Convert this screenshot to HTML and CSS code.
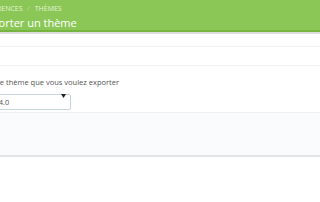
FILE: index.html
```html
<!DOCTYPE html>
<html lang="fr">
<head>
  <meta charset="UTF-8" />
  <title>Exporter un thème</title>
  <link rel="stylesheet" href="styles.css">
</head>
<body>
  <div class="toolbar">
    <div class="toolbar-inner">
      <div class="breadcrumb">Préférences <span class="sep">/</span> Thèmes</div>
      <h2 class="page-title">Exporter un thème</h2>
    </div>
  </div>

  <div class="panel">
    <div class="panel-heading"></div>
    <div class="panel-body">
      <label class="form-label" for="theme">Sélectionnez le thème que vous voulez exporter</label>
      <div class="select-wrap">
        <select id="theme" class="form-select">
          <option>default-bootstrap 1.4.0</option>
        </select>
        <svg class="caret" width="5" height="4" viewBox="0 0 5 4"><path d="M0 0h5L2.5 4z" fill="#222"/></svg>
      </div>
    </div>
    <div class="panel-footer"></div>
  </div>
</body>
</html>
```

FILE: styles.css
```css
body {
  margin: 0;
  padding: 0;
  font-family: "Open Sans", Arial, sans-serif;
  background: #fff;
  color: #555;
  overflow: hidden;
}

.toolbar {
  background-color: #8bc756;
  border-bottom: 2px solid #76b440;
  box-shadow: 0 2px 0 #dcdcdc;
  height: 30px;
}

.toolbar-inner {
  margin-left: -20px;
  padding-top: 4px;
}

.breadcrumb {
  margin-left: -3px;
  font-size: 7px;
  text-transform: uppercase;
  color: #e4f3d6;
  line-height: 9px;
}

.breadcrumb .sep {
  color: #b8df98;
  margin: 0 3px;
}

.page-title {
  margin: 3px 0 0;
  font-size: 11px;
  font-weight: normal;
  color: #fff;
  line-height: 14px;
}

.panel {
  margin-top: 14px;
}

.panel-heading {
  height: 18px;
  border-top: 1px solid #efefef;
  border-bottom: 1px solid #efefef;
}

.panel-body {
  padding: 12px 0 8px;
  margin-left: -48px;
}

.form-label {
  display: block;
  font-size: 7.5px;
  line-height: 9px;
  color: #555;
  margin-bottom: 1px;
}

.select-wrap {
  position: relative;
  width: 147px;
  height: 16px;
  margin-left: -28px;
}

.form-select {
  width: 100%;
  height: 16px;
  border: 1px solid #c7d6db;
  border-radius: 2px;
  background: #fff;
  font-family: inherit;
  font-size: 7.5px;
  color: #555;
  padding: 0 4px;
  appearance: none;
  -webkit-appearance: none;
}

.caret {
  position: absolute;
  right: 5px;
  top: 6px;
}

.panel-footer {
  height: 42px;
  background-color: #fafbfc;
  border-top: 1px solid #eef0f2;
  border-bottom: 2px solid #e2e4e6;
}
```
